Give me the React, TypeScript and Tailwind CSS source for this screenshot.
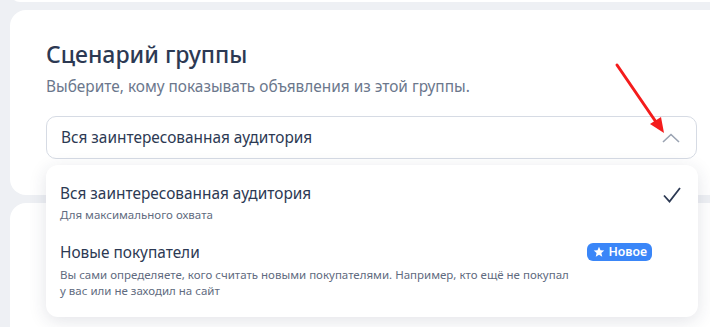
import React from "react";

export default function App() {
  return (
    <div
      className="relative w-[710px] h-[327px] overflow-hidden bg-[#eef0f4]"
      style={{ fontFamily: '"Noto Sans", "Open Sans", Arial, sans-serif' }}
    >
      <div className="ml-[10px] mr-[-20px] -mt-[18px] h-[20px] rounded-[16px] bg-white" />
      <div className="ml-[10px] mr-[-20px] mt-[8px] h-[185px] rounded-[16px] bg-white pl-[36px] pt-[29px]">
        <h1 className="text-[23px] leading-[30px] font-medium text-[#2c3953]">Сценарий группы</h1>
        <p className="mt-[8px] text-[15.4px] leading-[20px] text-[#6b778c]">
          Выберите, кому показывать объявления из этой группы.
        </p>
        <div className="mt-[19px] flex h-[43px] w-[651px] items-center justify-between rounded-[10px] border border-[#d6dbe4] pl-[14px] pr-[16px]">
          <span className="text-[15.4px] text-[#2c3953]">Вся заинтересованная аудитория</span>
          <svg width="18" height="10" viewBox="0 0 18 10" fill="none">
            <path d="M1 9 L9 1.5 L17 9" stroke="#9aa3b2" strokeWidth="1.6" />
          </svg>
        </div>
      </div>
      <div className="ml-[10px] mr-[-20px] mt-[8px] h-[200px] rounded-[16px] bg-white" />

      <div className="absolute left-[46px] top-[165px] h-[152px] w-[652px] rounded-[12px] bg-white pt-[19px] shadow-[0_4px_18px_rgba(40,50,80,0.13)]">
        <div className="flex items-start justify-between pl-[14px] pr-[17px]">
          <div>
            <div className="text-[15.4px] leading-[20px] text-[#2c3953]">Вся заинтересованная аудитория</div>
            <div className="mt-[3px] text-[11.5px] leading-[15px] text-[#5f6b80]">Для максимального охвата</div>
          </div>
          <svg className="mt-[3px]" width="18" height="16" viewBox="0 0 18 16" fill="none">
            <path d="M1 8.5 L6.5 14.5 L17 1" stroke="#2c3953" strokeWidth="1.8" />
          </svg>
        </div>
        <div className="mt-[21px] flex items-start justify-between pl-[14px] pr-[46px]">
          <div>
            <div className="text-[15.4px] leading-[20px] text-[#2c3953]">Новые покупатели</div>
            <div className="mt-[4px] whitespace-nowrap text-[11.5px] leading-[16px] text-[#5f6b80]">
              Вы сами определяете, кого считать новыми покупателями. Например, кто ещё не покупал
              <br />у вас или не заходил на сайт
            </div>
          </div>
          <div className="flex h-[18px] items-center gap-[3px] rounded-[6px] bg-[#3a86f8] pl-[6px] pr-[5px] text-[12.3px] font-semibold text-white">
            <svg width="12" height="12" viewBox="0 0 24 24" fill="white">
              <path d="M12 1.5 L15 8.4 L22.5 9.1 L16.8 14.1 L18.5 21.5 L12 17.6 L5.5 21.5 L7.2 14.1 L1.5 9.1 L9 8.4 Z" />
            </svg>
            <span>Новое</span>
          </div>
        </div>
      </div>

      <svg className="absolute left-0 top-0" width="710" height="327" viewBox="0 0 710 327">
        <line x1="617" y1="65" x2="656" y2="122" stroke="#f41c1c" strokeWidth="3" strokeLinecap="round" />
        <path d="M664 133 L650 124 L661 117 Z" fill="#f41c1c" />
      </svg>
    </div>
  );
}
